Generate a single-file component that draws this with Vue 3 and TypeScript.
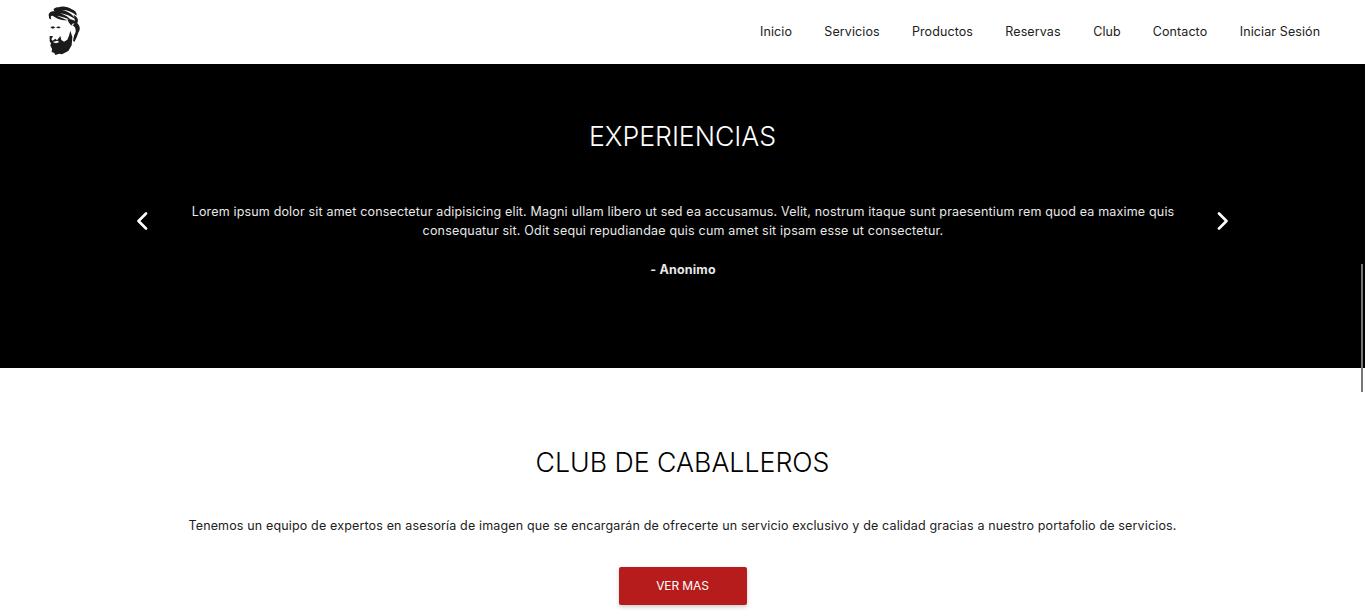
<script setup lang="ts">
interface NavLink {
  label: string
  width: number
}

const links: NavLink[] = [
  { label: 'Inicio', width: 32 },
  { label: 'Servicios', width: 56 },
  { label: 'Productos', width: 61 },
  { label: 'Reservas', width: 56 },
  { label: 'Club', width: 28 },
  { label: 'Contacto', width: 54 },
  { label: 'Iniciar Sesión', width: 82 },
]
</script>

<template>
  <div class="page">
    <header class="topbar">
      <svg class="logo" viewBox="0 0 150 192" aria-label="Barbería">
        <g fill="#1c1a1b">
          <path d="M27 50C23 39 33 33 44 34C36 28 45 22 56 22C67 17 84 20 94 27C106 31 111 38 110 47C98 36 82 30 66 30C84 34 98 42 108 59C93 49 76 41 60 40C74 44 86 51 94 62C80 53 64 50 51 47C61 53 72 55 83 61C62 62 49 55 39 48C32 46 31 51 34 58C29 57 26 54 27 50Z" />
          <path d="M82 58C96 56 107 62 111 71C103 68 96 69 94 77C88 71 85 66 82 58ZM101 45C112 50 117 60 112 70C119 76 121 85 118 92C114 97 113 105 109 114L103 126L99 122L102 107L107 96C108 87 105 79 97 76L103 72C105 64 105 55 101 45Z" />
          <path d="M31 81L40 79L46 83L37 86ZM48 82C54 78 60 78 62 84L54 85ZM29 108L39 108L34 118L38 122L46 116L51 121L61 108L64 120L72 125L82 119L87 107L91 92L97 111L95 136L85 153L66 163L58 161L46 165L43 159L35 156L36 146L31 137L33 130L29 124Z" />
        </g>
        <path fill="#fff" d="M38 126L52 122L58 126L48 130ZM63 111L68 113L66 117Z" />
      </svg>
      <nav class="links">
        <a v-for="link in links" :key="link.label" class="link" :style="{ width: link.width + 'px' }">{{ link.label }}</a>
      </nav>
    </header>

    <section class="reviews">
      <h2 class="title reviews-title">EXPERIENCIAS</h2>
      <div class="carousel">
        <svg class="arrow" viewBox="0 0 12 18"><path d="M10 1.5L2.5 9L10 16.5" /></svg>
        <blockquote class="quote">
          <p class="line first">Lorem ipsum dolor sit amet consectetur adipisicing elit. Magni ullam libero ut sed ea accusamus. Velit, nostrum itaque sunt praesentium rem quod ea maxime quis</p>
          <p class="line second">consequatur sit. Odit sequi repudiandae quis cum amet sit ipsam esse ut consectetur.</p>
          <p class="author">- Anonimo</p>
        </blockquote>
        <svg class="arrow" viewBox="0 0 12 18"><path d="M2 1.5L9.5 9L2 16.5" /></svg>
      </div>
    </section>

    <section class="club">
      <h2 class="title club-title">CLUB DE CABALLEROS</h2>
      <p class="club-text">Tenemos un equipo de expertos en asesoría de imagen que se encargarán de ofrecerte un servicio exclusivo y de calidad gracias a nuestro portafolio de servicios.</p>
      <button class="more">VER MAS</button>
    </section>
    <div class="scroll-thumb"></div>
  </div>
</template>

<style>
body {
  margin: 0;
  overflow: hidden;
}
</style>

<style scoped>
.page {
  position: relative;
  height: 616px;
  overflow: hidden;
  background: #fff;
  color: #212121;
  font-family: Inter, Roboto, sans-serif;
  font-size: 12.5px;
}
.topbar {
  display: flex;
  align-items: center;
  justify-content: space-between;
  box-sizing: border-box;
  height: 64px;
  padding: 0 44px 0 40px;
}
.logo {
  width: 50px;
  height: 64px;
}
.links {
  display: flex;
  gap: 32px;
}
.link {
  display: flex;
  justify-content: center;
  line-height: 20px;
  letter-spacing: 0.1px;
  white-space: nowrap;
}
.reviews {
  box-sizing: border-box;
  height: 304px;
  padding-top: 52px;
  background: #000;
  color: #e8e8e8;
}
.title {
  margin: 0;
  font-size: 26.7px;
  font-weight: 300;
  line-height: 40px;
  text-align: center;
}
.reviews-title {
  color: #fff;
  letter-spacing: -0.05px;
}
.carousel {
  display: flex;
  justify-content: space-between;
  width: 1093px;
  margin: 46px auto 0;
}
.arrow {
  width: 12px;
  height: 18px;
  margin-top: 10px;
  fill: none;
  stroke: #fff;
  stroke-width: 2.6;
  stroke-linecap: round;
  stroke-linejoin: round;
}
.quote {
  margin: 0;
  padding-left: 1px;
  text-align: center;
  white-space: nowrap;
}
.line {
  margin: 0;
  line-height: 19px;
}
.first {
  letter-spacing: 0.17px;
}
.second {
  letter-spacing: 0.19px;
}
.author {
  margin: 20px 0 0;
  font-weight: 700;
  line-height: 19px;
  letter-spacing: 0.2px;
}
.club {
  display: flex;
  flex-direction: column;
  align-items: center;
  padding-top: 74px;
}
.club-title {
  color: #000;
}
.club-text {
  margin: 34px 0 0;
  line-height: 20px;
  letter-spacing: 0.152px;
  white-space: nowrap;
}
.more {
  width: 128px;
  height: 38px;
  margin-top: 31px;
  padding: 0 0 2px;
  border: 0;
  border-radius: 2px;
  background: #b71c1c;
  box-shadow: 0 2px 4px rgba(0, 0, 0, 0.2);
  color: #fff;
  font: 12px Inter, Roboto, sans-serif;
  letter-spacing: -0.1px;
}
.scroll-thumb {
  position: absolute;
  top: 264px;
  right: 2px;
  width: 2px;
  height: 128px;
  background: #777;
}
</style>
